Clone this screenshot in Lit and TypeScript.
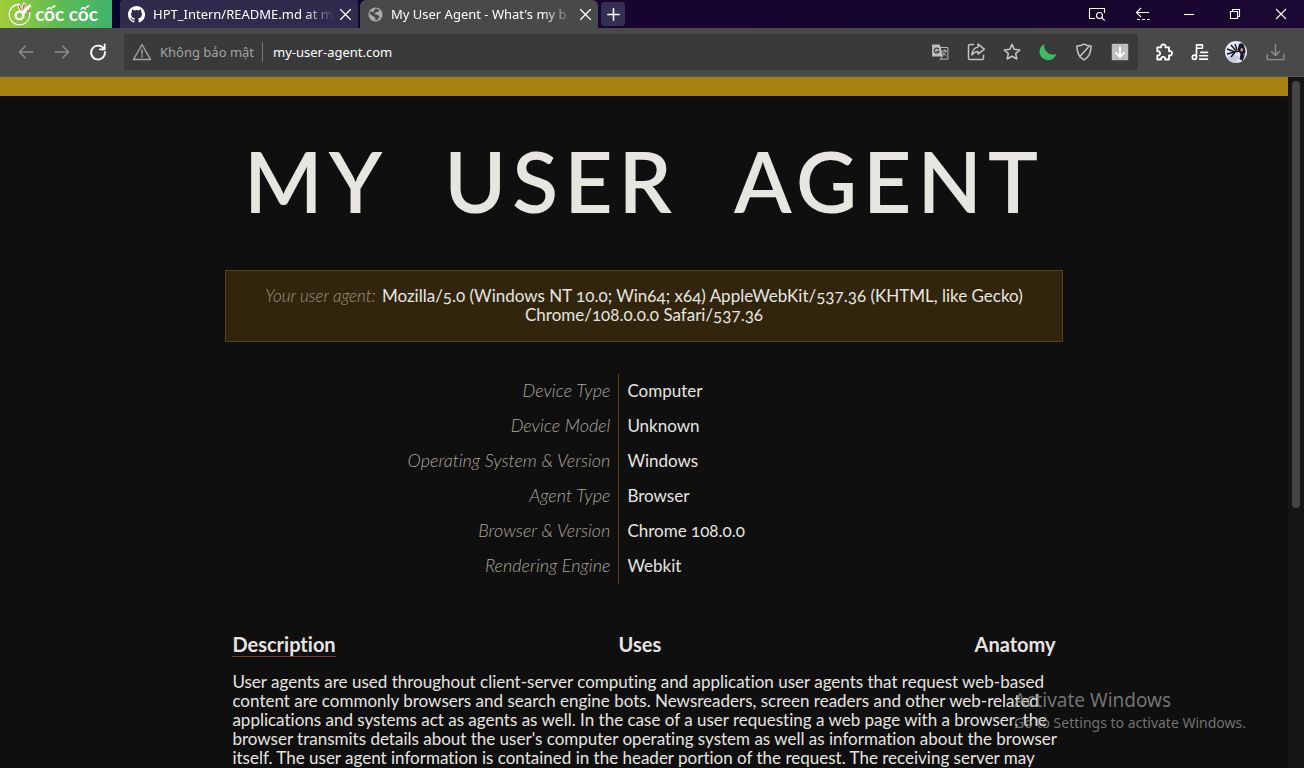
import { LitElement, html, css, svg } from "lit";
import { customElement, state } from "lit/decorators.js";

const ICONS = {
  back: svg`<path d="M20 12H4M11 5l-7 7 7 7"/>`,
  forward: svg`<path d="M4 12h16M13 5l7 7-7 7"/>`,
  reload: svg`<path stroke-width="2.200" d="M19.200 8.500A8.300 8.300 0 1 0 20.300 12"/><path stroke-width="2.200" d="M20 3v5.800h-5.800"/>`,
  warning: svg`<path d="M12 3 1.800 21h20.400z"/><path d="M12 9.500v5M12 16.500v1.500"/>`,
  translate: svg`<path fill="#bdbdbd" stroke="none" d="M1.500 2h10l1.500 4H1.500zM1.500 5h11.200l3.300 13H1.500z"/><path stroke="#bdbdbd" stroke-width="1.300" d="M13 6h9.500v15.500H12l3-3.500"/><path stroke="#3a3a3a" stroke-width="1.600" d="M10 8A3.200 3.200 0 1 0 10.600 11H8"/><path stroke="#bdbdbd" stroke-width="1.300" d="M14.500 10.500h6.500M18 9v1.500M20 10.500c-.5 3-2 4.500-4 6M16 12.500c.8 2 2 3.500 4 4.500"/>`,
  share: svg`<path d="M9 3H4.500A1.500 1.500 0 0 0 3 4.500v15A1.500 1.500 0 0 0 4.500 21h15a1.500 1.500 0 0 0 1.500-1.500V16"/><path d="M14.500 2.500 22 8.500l-7.500 6V11.500C11 11.500 9 13 7 15.500 7.500 10.500 10.500 6.500 14.500 6z"/>`,
  star: svg`<path d="m12 2.800 2.700 6 6.600.7-4.900 4.400 1.400 6.500L12 17.100l-5.800 3.300 1.400-6.500-4.900-4.400 6.600-.7z"/>`,
  moon: svg`<path fill="#3dbb62" stroke="none" d="M7.500 2.500A10.200 10.200 0 1 0 22 14C16 17.500 6.500 12.500 7.500 2.500z"/>`,
  shield: svg`<path d="M12 2.500c2.500 1.600 5.500 2.200 8.500 2.200 0 7.500-1.500 13-8.500 16.800C5 17.700 3.500 12.200 3.500 4.700c3 0 6-.6 8.500-2.200z"/><path d="M17.500 6 7 17.500"/>`,
  saveBox: svg`<rect x="1" y="1" width="22" height="22" rx="1.500" fill="#bdbdbd" stroke="none"/><path stroke="#fff" stroke-width="2.400" d="M12 5.500v13M6.500 13l5.500 5.500 5.500-5.500"/>`,
  puzzle: svg`<path stroke-width="2.200" d="M4 6.500h4.700a2.700 2.700 0 1 1 5 0H18V11a2.700 2.700 0 1 1 0 5v5h-4.600a2.500 2.500 0 1 0-4.800 0H4v-4.900a2.600 2.600 0 1 0 0-5z"/>`,
  music: svg`<g stroke-width="2.200"><circle cx="4.500" cy="19" r="2.800"/><path d="M7.300 19V2.500h8V7h-8M13 12.500h9M11.500 17h10.500M11.500 21.500h10.500"/></g>`,
  download: svg`<path d="M1.500 14.500V20a1 1 0 0 0 1 1h19a1 1 0 0 0 1-1v-5.500M12 2v13.500M7 10.800l5 5 5-5"/>`,
  close: svg`<path d="m5 5 14 14M19 5 5 19"/>`,
  plus: svg`<path stroke-width="2.200" d="M12 4v16M4 12h16"/>`,
};

const icon = (shape: unknown, size = 20) => html`
  <svg width=${size} height=${size} viewBox="0 0 24 24" fill="none" stroke="currentColor"
    stroke-width="1.800" stroke-linejoin="round" stroke-linecap="round" aria-hidden="true">${shape}</svg>`;

const winIcon = (shape: unknown) => html`
  <svg width="18" height="16" viewBox="0 0 18 16" fill="none" stroke="currentColor" stroke-width="1.100" aria-hidden="true">${shape}</svg>`;

@customElement("browser-tabs")
class BrowserTabs extends LitElement {
  static styles = css`
    :host { display: flex; height: 28px; background: linear-gradient(90deg, #08062c, #170530 45%, #13052b 75%, #1b0733); color: #fff; font: 13px/28px "Noto Sans", sans-serif; }
    * { box-sizing: border-box; }
    button { border: 0; padding: 0; margin: 0; background: none; color: inherit; display: flex; align-items: center; justify-content: center; }
    .brand { width: 112px; gap: 3px; padding-right: 6px; background: linear-gradient(90deg, #a2ce3a, #5bbb55 55%, #3db36b); font: 700 19px/28px Lato, sans-serif; }
    .tabs { display: flex; gap: 2px; margin-left: 8px; }
    .tab { display: flex; align-items: center; width: 238px; padding: 0 4px 0 8px; background: #302b4c; border-radius: 3px 3px 0 0; }
    .active { background: #494949; border-radius: 6px 6px 0 0; }
    .label { flex: 1; min-width: 0; margin-left: 8px; overflow: hidden; white-space: nowrap; -webkit-mask-image: linear-gradient(90deg, #000 82%, transparent 99%); mask-image: linear-gradient(90deg, #000 82%, transparent 99%); }
    .close { width: 18px; height: 20px; }
    .new { width: 24px; height: 24px; margin: 2px 0 0 3px; background: #352f54; border-radius: 3px; }
    .window { display: flex; margin-left: auto; }
    .window button { width: 46px; }
  `;
  render() {
    return html`
      <button class="brand">
        <svg width="24" height="26" viewBox="0 0 24 26" fill="none" stroke="#fff" stroke-width="1.200" aria-hidden="true">
          <path d="M12 3.200A10.300 10.300 0 1 0 21.500 11"/>
          <circle cx="11.500" cy="14.500" r="3.900" stroke-width="2.400"/>
          <path d="M13.500 11.500 19 6l1.500 2-5 5z" fill="#fff"/>
          <path d="m10.500 4 2.500 5M16.500 2l-1.500 5M22.500 4l-4 4" stroke-width="3"/>
          <path d="m10.800 4.500 2 4M16.500 3l-1.200 4M19 10h3" stroke="#e3503e" stroke-width="1.500"/>
        </svg>
        <span>cốc cốc</span>
      </button>
      <div class="tabs">
        <div class="tab">
          <svg width="17" height="17" viewBox="0 0 16 16" fill="#fff" aria-hidden="true"><path d="M8 0C3.580 0 0 3.580 0 8c0 3.540 2.290 6.530 5.470 7.590.4.070.55-.17.55-.38v-1.490c-2.010.37-2.530-.49-2.690-.94-.09-.23-.48-.94-.82-1.130-.28-.15-.68-.52-.01-.53.63-.01 1.080.58 1.230.82.72 1.210 1.870.87 2.330.66.07-.52.28-.87.51-1.070-1.780-.2-3.640-.89-3.640-3.950 0-.87.31-1.590.82-2.150-.08-.2-.36-1.020.08-2.120 0 0 .67-.21 2.200.82a7.400 7.400 0 0 1 4 0c1.530-1.040 2.200-.82 2.200-.82.44 1.100.16 1.920.08 2.120.51.56.82 1.270.82 2.150 0 3.070-1.870 3.750-3.650 3.950.29.25.54.73.54 1.480v2.200c0 .21.15.46.55.38A8 8 0 0 0 8 0z"/></svg>
          <span class="label">HPT_Intern/README.md at m</span>
          <button class="close" aria-label="Close tab">${icon(ICONS.close, 17)}</button>
        </div>
        <div class="tab active">
          <svg width="15" height="15" viewBox="0 0 16 16" aria-hidden="true"><circle cx="8" cy="8" r="7.500" fill="#a9abae"/><path fill="#494949" d="M8.500 1.500 12 3l-1 2-3 .5L7 7.500l3.500 1 2 2-2.500 3-2 .5-.5-3L5 9.500 1.500 7l1-2.500 3 1 1-2z"/></svg>
          <span class="label">My User Agent - What's my b</span>
          <button class="close" aria-label="Close tab">${icon(ICONS.close, 17)}</button>
        </div>
      </div>
      <button class="new" aria-label="New tab">${icon(ICONS.plus, 17)}</button>
      <div class="window">
        <button aria-label="Search tabs">${winIcon(svg`<path d="M7 12.500H1.500v-10h15V7"/><circle cx="11.500" cy="9.500" r="3"/><path d="m13.700 11.700 3 3"/>`)}</button>
        <button aria-label="Side bar">${winIcon(svg`<path d="M15 6.500H3M7 2 2.500 6.500 7 11"/><path stroke-dasharray="3 2" d="M3 13.500h13"/>`)}</button>
        <button aria-label="Minimize">${winIcon(svg`<path d="M4 8.500h10"/>`)}</button>
        <button aria-label="Restore">${winIcon(svg`<path d="M4.500 5.500h7v7h-7zM6.500 5.500v-2h7v7h-2"/>`)}</button>
        <button aria-label="Close">${winIcon(svg`<path d="m4 3 10 10M14 3 4 13"/>`)}</button>
      </div>`;
  }
}

@customElement("browser-toolbar")
class BrowserToolbar extends LitElement {
  static styles = css`
    :host { display: flex; align-items: center; height: 49px; box-sizing: border-box; padding: 0 11px 0 8px; background: #494949; border-bottom: 1px solid #5d5656; color: #fff; font: 13px/20px "Noto Sans", sans-serif; }
    * { box-sizing: border-box; }
    button { flex: none; border: 0; padding: 0; margin: 0; background: none; width: 36px; height: 36px; display: flex; align-items: center; justify-content: center; color: inherit; }
    .dim { color: #8f8f8f; }
    .address { flex: 1; min-width: 0; height: 36px; margin: 0 8px; display: flex; align-items: center; background: #3a3a3a; border-radius: 3px; color: #c4c4c4; }
    .security { width: auto; padding: 0 8px; gap: 8px; font: inherit; color: #a3a3a3; }
    .rule { width: 1px; height: 20px; background: #777; }
    input { flex: 1; min-width: 0; border: 0; background: none; outline: 0; color: #fff; font: inherit; padding: 0 10px; }
    .extras { display: flex; }
    .extras .dim { margin-left: 3px; }
  `;
  render() {
    return html`
      <button class="dim" aria-label="Back">${icon(ICONS.back)}</button>
      <button class="dim" aria-label="Forward">${icon(ICONS.forward)}</button>
      <button aria-label="Reload">${icon(ICONS.reload)}</button>
      <div class="address">
        <button class="security">${icon(ICONS.warning)}<span>Không bảo mật</span></button>
        <span class="rule"></span>
        <input aria-label="Address" value="my-user-agent.com" />
        <button aria-label="Translate">${icon(ICONS.translate, 18)}</button>
        <button aria-label="Share">${icon(ICONS.share)}</button>
        <button aria-label="Bookmark">${icon(ICONS.star)}</button>
        <button aria-label="Dark mode">${icon(ICONS.moon)}</button>
        <button aria-label="Ad block">${icon(ICONS.shield)}</button>
        <button aria-label="Save media">${icon(ICONS.saveBox, 18)}</button>
      </div>
      <div class="extras">
        <button aria-label="Extensions">${icon(ICONS.puzzle)}</button>
        <button aria-label="Music">${icon(ICONS.music, 18)}</button>
        <button aria-label="Profile">
          <svg width="22" height="22" viewBox="0 0 22 22" aria-hidden="true">
            <circle cx="11" cy="11" r="11" fill="#e4e9f5"/>
            <path d="M2 17a11 11 0 0 0 9 5l3-6-6-3z" fill="#c5cbe0"/>
            <path d="M14 3c3-2 5 0 5.500 3l1 4-1 5-2 5-3-2 1-5-3-4z" fill="#1d1b29"/>
            <path d="M2 8l8 3 4-1M2 13l8-2M6 4l5 6M10 3l2 6M6 16l5-6" stroke="#191822" stroke-width="1.400" fill="none"/>
            <path d="M16 7l2 1-.5 2.500-2-.5z" fill="#e9b6a4"/><path d="M18 12l2 1-1 3z" fill="#8a5fa0"/>
          </svg>
        </button>
        <button class="dim" aria-label="Downloads">${icon(ICONS.download, 19)}</button>
      </div>`;
  }
}

const FACTS = [
  ["Device Type", "Computer"],
  ["Device Model", "Unknown"],
  ["Operating System & Version", "Windows"],
  ["Agent Type", "Browser"],
  ["Browser & Version", "Chrome 108.0.0"],
  ["Rendering Engine", "Webkit"],
];

@customElement("agent-page")
class AgentPage extends LitElement {
  @state() section = "Description";

  static styles = css`
    :host { display: block; overflow: hidden; background: #0f0f0f; border-top: 19px solid #a6810f; color: #e7e5e0; font: 17px/19px Lato, sans-serif; font-variant-numeric: oldstyle-nums; font-variant-ligatures: no-common-ligatures; }
    * { box-sizing: border-box; }
    main { width: 65%; margin: 0 auto; }
    h1 { margin: 0; padding: 30px 0 34px; display: flex; justify-content: center; gap: 56px; font-size: 84px; line-height: 110px; font-weight: 600; letter-spacing: 6px; white-space: nowrap; }
    .agent { margin: 0; padding: 15px 32px 17px; text-align: center; background: #31260d; border: 1px solid #55461a; }
    .caption { font-style: italic; font-weight: 300; color: #a09684; margin-right: 2px; }
    table { width: 100%; margin-top: 32px; border-collapse: collapse; }
    th, td { height: 35px; padding: 0 8px 2px; text-align: left; vertical-align: middle; }
    th { width: 47%; text-align: right; font-size: 18px; font-weight: 300; font-style: italic; color: #aba69e; border-right: 1px solid #5a4216; }
    .sections { display: grid; grid-template-columns: 33% 33% 1fr; margin-top: 48px; padding: 0 7px; }
    .sections button { justify-self: center; border: 0; border-bottom: 1px solid transparent; padding: 0; background: none; color: inherit; font: 700 20px/24px Lato, sans-serif; font-variant-ligatures: inherit; }
    .sections button:first-child { justify-self: start; }
    .sections button:last-child { justify-self: end; }
    .sections .current { border-color: #6b4220; }
    .text { margin: 15px 0 0; padding-left: 7px; }
  `;
  render() {
    return html`<main>
      <h1><span>MY</span> <span>USER</span> <span>AGENT</span></h1>
      <p class="agent"><span class="caption">Your user agent:</span> Mozilla/5.0 (Windows NT 10.0; Win64; x64) AppleWebKit/537.36 (KHTML, like Gecko) Chrome/108.0.0.0 Safari/537.36</p>
      <table>${FACTS.map(([name, value]) => html`<tr><th scope="row">${name}</th><td>${value}</td></tr>`)}</table>
      <div class="sections">
        ${["Description", "Uses", "Anatomy"].map((name) => html`<button class=${name === this.section ? "current" : ""} @click=${() => (this.section = name)}>${name}</button>`)}
      </div>
      <p class="text">User agents are used throughout client-server computing and application user agents that request web-based content are commonly browsers and search engine bots. Newsreaders, screen readers and other web-related applications and systems act as agents as well. In the case of a user requesting a web page with a browser, the browser transmits details about the user's computer operating system as well as information about the browser itself. The user agent information is contained in the header portion of the request. The receiving server may</p>
    </main>`;
  }
}

@customElement("app-root")
class AppRoot extends LitElement {
  static styles = css`
    :host { display: flex; flex-direction: column; height: 100vh; overflow: hidden; position: relative; background: #0f0f0f; }
    .viewport { flex: 1; min-height: 0; display: flex; }
    agent-page { flex: 1; min-width: 0; }
    .scrollbar { width: 16px; padding: 4px; background: #151515; box-sizing: border-box; }
    .thumb { height: 62.500%; background: #454545; border-radius: 4px; }
    .notice { position: absolute; right: 58px; bottom: 35px; color: rgba(150, 150, 150, 0.75); font: 14px/20px "Noto Sans", sans-serif; pointer-events: none; }
    .notice strong { display: block; font-weight: 400; font-size: 19px; line-height: 26px; }
  `;
  render() {
    return html`
      <browser-tabs></browser-tabs>
      <browser-toolbar></browser-toolbar>
      <div class="viewport">
        <agent-page></agent-page>
        <div class="scrollbar"><div class="thumb"></div></div>
      </div>
      <div class="notice"><strong>Activate Windows</strong>Go to Settings to activate Windows.</div>`;
  }
}
